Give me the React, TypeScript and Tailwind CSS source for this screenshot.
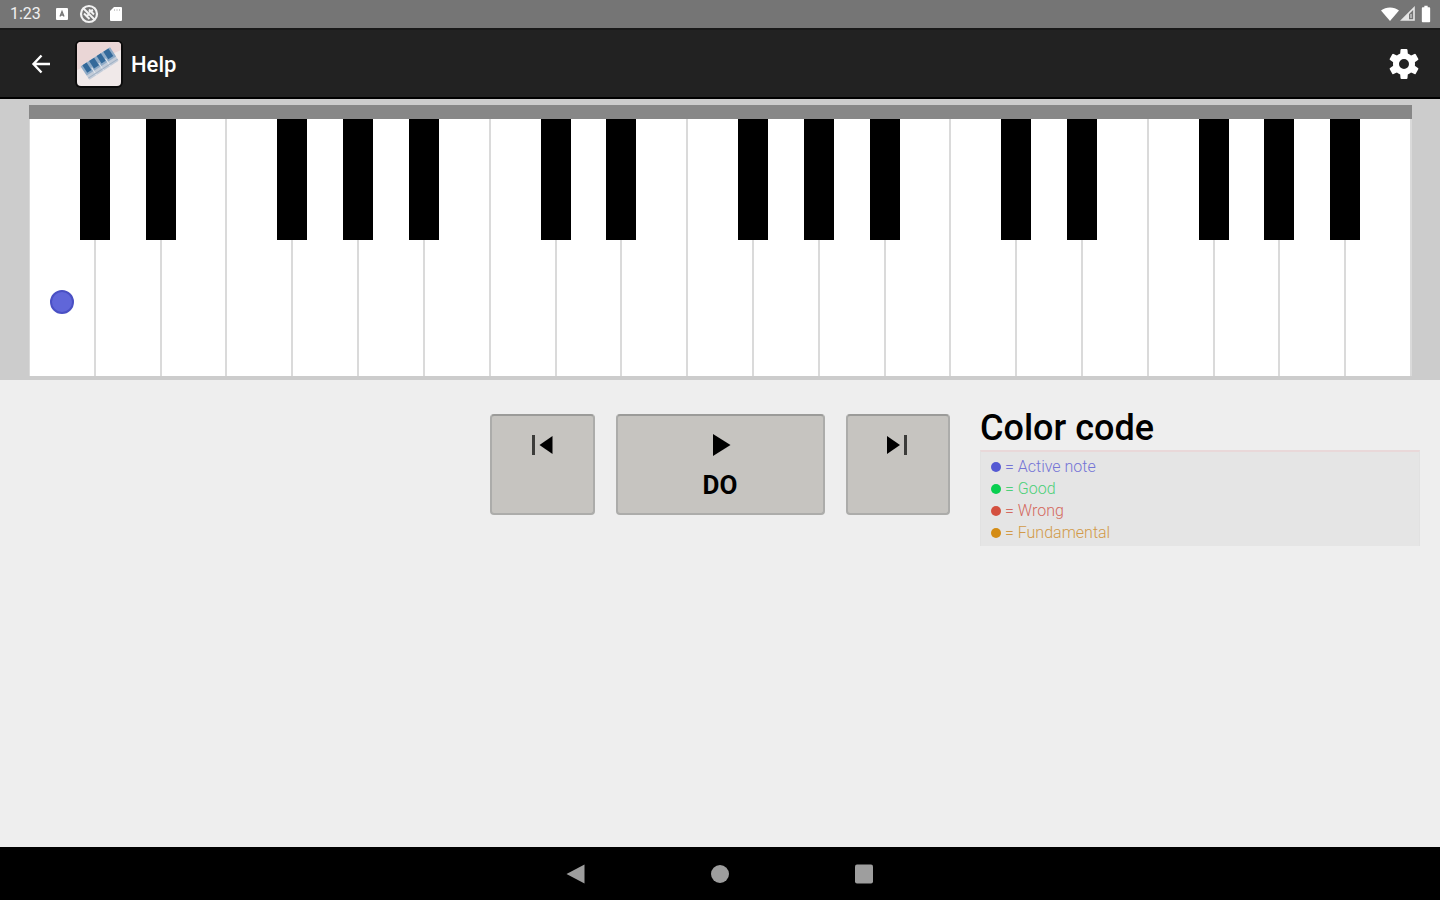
import React from "react";
import { MdBatteryFull } from "react-icons/md";

const NOTES = ["C", "D", "E", "F", "G", "A", "B"];
const WITH_SHARP = ["C", "D", "F", "G", "A"];
const KEYS = Array.from({ length: 21 }, (_, i) => ({
  note: NOTES[i % 7],
  octave: Math.floor(i / 7) + 1,
  active: i === 0,
}));

const LEGEND = [
  { label: "Active note", dot: "bg-[#5459d3]", text: "text-[#7474d6]" },
  { label: "Good", dot: "bg-[#08cf50]", text: "text-[#4dd07a]" },
  { label: "Wrong", dot: "bg-[#d4503f]", text: "text-[#d46a60]" },
  { label: "Fundamental", dot: "bg-[#d48c15]", text: "text-[#d29a48]" },
];

function StatusBar() {
  return (
    <div className="flex h-7 items-center justify-between bg-[#757575] pr-1 pl-2.5 text-white/90">
      <div className="flex items-center">
        <span className="w-[46px] text-base leading-7">1:23</span>
        <svg className="size-3" viewBox="0 0 12 12" aria-hidden="true">
          <rect width="12" height="12" rx="1" fill="#fff" />
          <path d="M4 8.500 6 3.500l2 5M4.500 7h3" stroke="#757575" strokeWidth="1.300" fill="none" />
        </svg>
        <svg className="ml-[11px] size-5" viewBox="0 0 20 20" aria-hidden="true">
          <circle cx="10" cy="10" r="8" fill="none" stroke="#f2f2f2" strokeWidth="2.200" />
          <path d="m4.500 4.500 11 11M10 5.500l5 5M5 9.500l5.500 5.500M7 13l3-3M10 8l4-2" stroke="#f2f2f2" strokeWidth="2" fill="none" />
        </svg>
        <svg className="ml-[11px] h-4 w-3" viewBox="0 0 12 16" aria-hidden="true">
          <path d="M4 1h7a1 1 0 0 1 1 1v12a1 1 0 0 1-1 1H1a1 1 0 0 1-1-1V5z" fill="#fff" />
          <path d="M4.500 3v2M7 3v2M9.500 3v2" stroke="#ccc" />
        </svg>
      </div>
      <div className="flex items-center">
        <svg className="h-4 w-5" viewBox="0 0 20 16" aria-hidden="true">
          <path d="M1 4.500C6 .5 14 .5 19 4.500L10 15z" fill="#fff" />
        </svg>
        <svg className="size-4" viewBox="0 0 16 16" aria-hidden="true">
          <path d="M14 2v12H2z" fill="none" stroke="#e6e6e6" strokeWidth="1.600" />
          <path d="M9 7v7H2z" fill="#e6e6e6" />
          <path d="M11 8v4" stroke="#e6e6e6" />
        </svg>
        <MdBatteryFull className="size-5 text-white" />
      </div>
    </div>
  );
}

function AppLogo() {
  return (
    <svg className="size-12" viewBox="0 0 48 48" aria-hidden="true">
      <rect width="48" height="48" rx="6" fill="#0c0c0c" />
      <rect x="2" y="2" width="44" height="44" rx="4" fill="#f0e9e9" />
      <path d="M2 30V6a4 4 0 0 1 4-4h36a4 4 0 0 1 4 4v4z" fill="#ead6d6" />
      <g transform="translate(6 25) rotate(-33)">
        <rect x="-1" y="1" width="35" height="16" rx="1" fill="#c3ccd9" />
        <rect x="-1" y="1" width="35" height="11" fill="#8fabc7" />
        <path d="M1 1h5v9H1zM9 1h6v9H9zM18 1h5v9h-5zM26 1h6v9h-6z" fill="#33699a" />
        <path d="M7.500 8v9M16 8v9M24 8v9" stroke="#e3e7ee" />
        <path d="M-1 15h35" stroke="#9fb0c4" />
      </g>
    </svg>
  );
}

function BackIcon() {
  return (
    <svg className="size-[26px]" viewBox="0 0 26 26" fill="none" stroke="currentColor" strokeWidth="2.400" aria-hidden="true">
      <path d="M22 13H6M13.500 4.500 5.500 13l8 8.500" />
    </svg>
  );
}

function GearIcon() {
  return (
    <svg className="size-9" viewBox="0 0 36 36" aria-hidden="true">
      <circle cx="18" cy="18" r="8" fill="none" stroke="currentColor" strokeWidth="6" />
      <g fill="currentColor" stroke="currentColor" strokeWidth="2" strokeLinejoin="round">
        <path d="m15.500 4-.5 6h6l-.5-6z" />
        <path d="m15.500 4-.5 6h6l-.5-6z" transform="rotate(60 18 18)" />
        <path d="m15.500 4-.5 6h6l-.5-6z" transform="rotate(120 18 18)" />
        <path d="m15.500 4-.5 6h6l-.5-6z" transform="rotate(180 18 18)" />
        <path d="m15.500 4-.5 6h6l-.5-6z" transform="rotate(240 18 18)" />
        <path d="m15.500 4-.5 6h6l-.5-6z" transform="rotate(300 18 18)" />
      </g>
    </svg>
  );
}

function AppBar() {
  return (
    <header className="flex h-[71px] items-center border-y-2 border-t-[#191919] border-b-black bg-[#222] pr-[18px] pl-7">
      <button type="button" aria-label="Back" className="text-white">
        <BackIcon />
      </button>
      <div className="ml-[21px]">
        <AppLogo />
      </div>
      <h1 className="ml-2 pt-0.5 text-[22px] font-medium text-white">Help</h1>
      <button type="button" aria-label="Settings" className="ml-auto text-white">
        <GearIcon />
      </button>
    </header>
  );
}

function Piano() {
  return (
    <section aria-label="Keyboard" className="bg-[#ccc] pt-1.5 pr-7 pb-1 pl-[29px]">
      <div className="h-3.5 bg-[#878787]" />
      <div className="flex h-[257px] border-l border-[#dadada] bg-white">
        {KEYS.map(({ note, octave, active }) => (
          <div key={note + octave} className="relative flex-1">
            <button
              type="button"
              aria-label={`${note}${octave}`}
              className="flex size-full justify-center border-r-2 border-[#dadada] bg-white pt-[171px]"
            >
              {active && <span className="size-6 rounded-full border-2 border-[#4a50c4] bg-[#6066d9]" />}
            </button>
            {WITH_SHARP.includes(note) && (
              <button
                type="button"
                aria-label={`${note} sharp ${octave}`}
                className="absolute top-0 right-px z-10 h-[121px] w-[30px] translate-x-1/2 bg-black"
              />
            )}
          </div>
        ))}
      </div>
    </section>
  );
}

const CONTROL =
  "flex h-[101px] flex-col items-center rounded-[4px] border-2 border-[#acacaa] border-t-[#9b9b99] bg-[#c6c4c0] pt-[17px] text-black";

function Controls() {
  return (
    <div className="grid grid-cols-[1fr_2fr_1fr] gap-[21px] px-2.5 pt-[34px]">
      <button type="button" aria-label="Previous note" className={CONTROL}>
        <svg className="size-6" viewBox="0 0 24 24" aria-hidden="true">
          <path d="M2 2h3v20h-3z" fill="#3c3c3a" />
          <path d="M22.500 3v18L9.500 12z" />
        </svg>
      </button>
      <button type="button" className={CONTROL}>
        <svg className="size-6" viewBox="0 0 24 24" aria-hidden="true">
          <path d="M5 1v22L22.500 12z" />
        </svg>
        <span className="mt-2 text-[26px] leading-10 font-bold">DO</span>
      </button>
      <button type="button" aria-label="Next note" className={CONTROL}>
        <svg className="size-6" viewBox="0 0 24 24" aria-hidden="true">
          <path d="M1 3v18l13-9z" />
          <path d="M18 2h3v20h-3z" fill="#3c3c3a" />
        </svg>
      </button>
    </div>
  );
}

function Legend() {
  return (
    <aside className="px-5 pt-[26px]">
      <h2 className="text-4xl leading-[44px] font-medium text-black">Color code</h2>
      <ul className="border-x border-t-2 border-x-[#e1e1e1] border-t-[#e9d8d9] bg-[#e5e5e5] pt-1 pb-0.5 pl-2.5 text-base leading-[22px]">
        {LEGEND.map(({ label, dot, text }) => (
          <li key={label} className="flex items-center">
            <span className={`size-2.5 rounded-full ${dot}`} />
            <span className={`ml-1 font-light ${text}`}>= {label}</span>
          </li>
        ))}
      </ul>
    </aside>
  );
}

function NavigationBar() {
  return (
    <nav aria-label="System" className="flex h-[53px] items-center justify-center gap-[120px] bg-black text-[#9e9e9e]">
      <button type="button" aria-label="Back">
        <svg className="size-6" viewBox="0 0 24 24" fill="currentColor" aria-hidden="true">
          <path d="M20.500 2.500v19L2.500 12z" />
        </svg>
      </button>
      <button type="button" aria-label="Home">
        <svg className="size-6" viewBox="0 0 24 24" fill="currentColor" aria-hidden="true">
          <circle cx="12" cy="12" r="9" />
        </svg>
      </button>
      <button type="button" aria-label="Recent apps">
        <svg className="size-6" viewBox="0 0 24 24" fill="currentColor" aria-hidden="true">
          <rect x="3" y="2.500" width="18" height="19" rx="2" />
        </svg>
      </button>
    </nav>
  );
}

export default function App() {
  return (
    <div className="flex min-h-screen flex-col bg-[#eee] font-[Roboto,sans-serif]">
      <StatusBar />
      <AppBar />
      <Piano />
      <main className="grid flex-1 grid-cols-3 items-start">
        <div className="col-start-2">
          <Controls />
        </div>
        <Legend />
      </main>
      <NavigationBar />
    </div>
  );
}
